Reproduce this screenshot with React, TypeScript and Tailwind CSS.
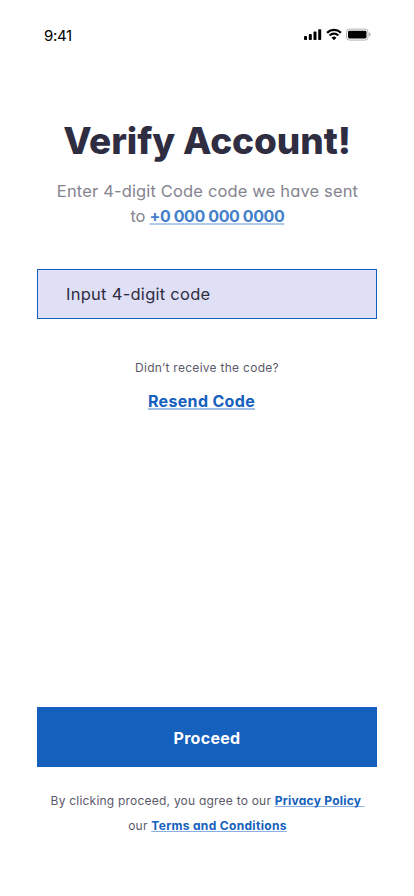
function SignalIcon() {
  return (
    <svg width="18" height="13" viewBox="0 -0.6 18 13" fill="#000">
      <rect x="0" y="7.5" width="3" height="4" rx="0.8" />
      <rect x="4.8" y="5.5" width="3" height="6" rx="0.8" />
      <rect x="9.5" y="3" width="3" height="8.5" rx="0.8" />
      <rect x="14.2" y="0.6" width="3" height="10.9" rx="0.8" />
    </svg>
  );
}

function WifiIcon() {
  return (
    <svg width="16" height="13" viewBox="0 -0.5 16 13" fill="#000">
      <path d="M8 2.6c2.2 0 4.3.85 5.9 2.36.12.12.31.12.43 0l1.15-1.16a.32.32 0 0 0 0-.46 10.8 10.8 0 0 0-14.96 0 .32.32 0 0 0 0 .46l1.15 1.16c.12.12.31.12.43 0A8.56 8.56 0 0 1 8 2.6Z" />
      <path d="M8 6.36c1.2 0 2.37.45 3.26 1.26.12.12.31.11.43 0l1.15-1.17a.33.33 0 0 0 0-.47 7.04 7.04 0 0 0-9.68 0 .33.33 0 0 0 0 .47l1.15 1.16c.12.12.31.12.43 0A4.83 4.83 0 0 1 8 6.36Z" />
      <path d="M10.26 8.91c.13.13.13.34 0 .47l-2.03 2.04a.33.33 0 0 1-.46 0L5.74 9.38a.32.32 0 0 1 .01-.47 3.45 3.45 0 0 1 4.5 0Z" />
    </svg>
  );
}

function BatteryIcon() {
  return (
    <svg width="25" height="13" viewBox="0 -0.6 25 13">
      <rect x="0.5" y="0.5" width="21.5" height="11" rx="3" fill="none" stroke="#000" strokeOpacity="0.3" />
      <path d="M23.2 4v4c.8-.35 1.3-1.1 1.3-2s-.5-1.65-1.3-2Z" fill="#000" fillOpacity="0.4" />
      <rect x="2" y="2.2" width="18.5" height="7.6" rx="1.4" fill="#000" />
    </svg>
  );
}

export default function App() {
  return (
    <main className="flex h-[896px] w-[414px] flex-col bg-white px-[37px] font-['Inter','Liberation_Sans',sans-serif] text-[#2f2d42] [font-feature-settings:'cv11'] whitespace-nowrap">
      <header className="flex h-[60px] items-start justify-between pt-7">
        <time className="ml-[7px] mt-[-1px] text-[15px] leading-[18px] tracking-[-0.3px] text-black">9:41</time>
        <div className="mr-[6px] flex gap-[4px]">
          <SignalIcon />
          <WifiIcon />
          <BatteryIcon />
        </div>
      </header>

      <section className="mt-[51px] flex flex-col items-center">
        <h1 className="text-[37px] font-extrabold leading-[60px] tracking-[-0.1px]">Verify Account!</h1>
        <p className="mt-[8px] text-center text-[16.5px] leading-[25px] text-[#85848f]">
          <span className="block pl-px tracking-[0.15px]">Enter 4-digit Code code we have sent</span>
          <span className="inline-block pl-px tracking-[-0.3px]">to&nbsp;</span>
          <a className="text-[16px] font-bold tracking-[-0.4px] text-[#4480cb] underline decoration-[#b3cbea] decoration-2 underline-offset-[1px] [text-decoration-skip-ink:none]">+0 000 000 0000</a>
        </p>
      </section>

      <div className="mt-10 flex h-[50px] items-center border border-[#1560bd] bg-[#dfe0f5] pl-[28px] text-[16.5px] tracking-[0.27px]">
        <span>Input 4-digit code</span>
      </div>

      <section className="mt-[39px] flex flex-col items-center">
        <p className="text-[12px] leading-5 tracking-[0.28px] text-[#5b596a]">Didn’t receive the code?</p>
        <a className="mr-[11px] mt-[15px] text-[16px] font-bold leading-[17px] tracking-[0.33px] text-[#1560bd] underline decoration-[#a0c0e8] decoration-2 underline-offset-[1px] [text-decoration-skip-ink:none]">Resend Code</a>
      </section>

      <footer className="mt-auto flex flex-col items-center pb-[58px]">
        <button className="h-[60px] w-full bg-[#1560bd] pt-[2px] text-[16px] font-bold tracking-[0.3px] text-white">Proceed</button>
        <p className="mt-[21px] pl-px text-center text-[12px] leading-[25px] tracking-[0.22px] text-[#5b596a]">
          <span className="block">
            <span>By clicking proceed, you agree to our </span>
            <a className="font-bold tracking-[0.25px] text-[#1560bd] underline decoration-[#8bb0df] decoration-1 underline-offset-[1px] [text-decoration-skip-ink:none]">Privacy Policy{"\u00a0"}</a>
          </span>
          <span>our </span>
          <a className="font-bold tracking-[0.33px] text-[#1560bd] underline decoration-[#8bb0df] decoration-1 underline-offset-[1px] [text-decoration-skip-ink:none]">Terms and Conditions</a>
        </p>
      </footer>
    </main>
  );
}
